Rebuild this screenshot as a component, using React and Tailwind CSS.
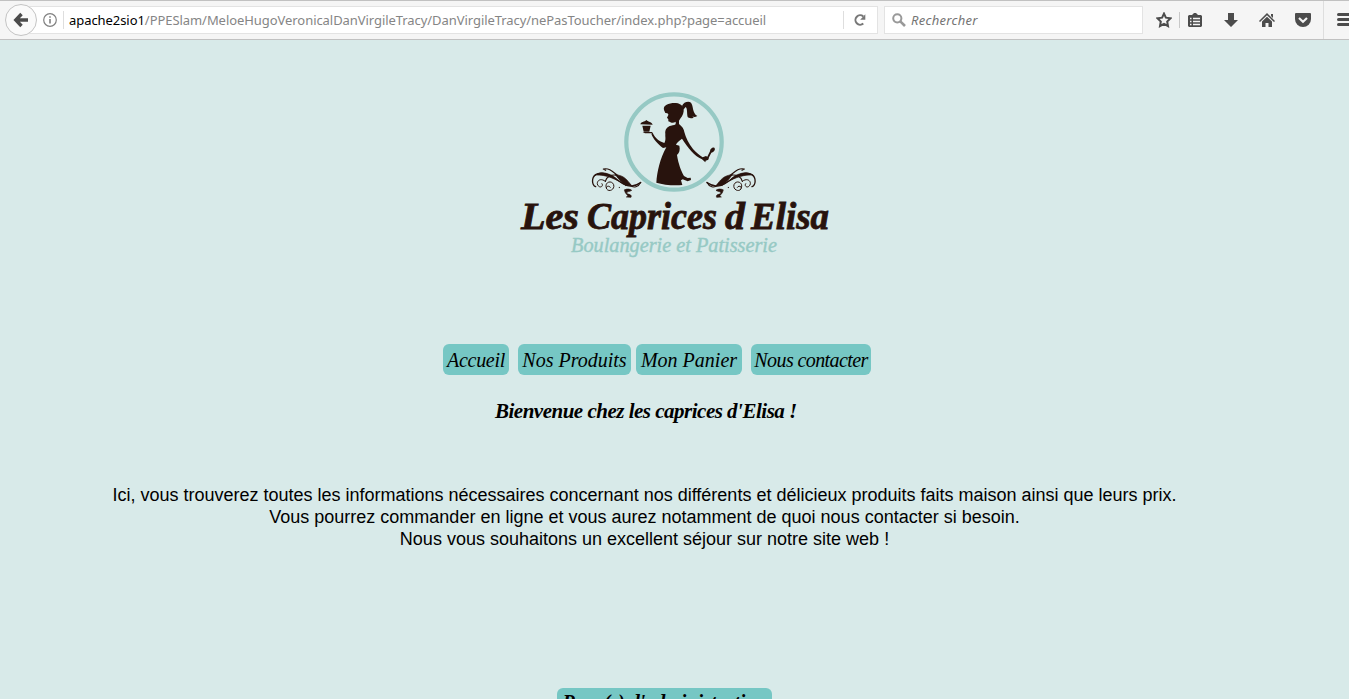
import React from "react";

const script = "font-['Brush_Script_MT','Liberation_Serif',serif] italic";

function Flourish() {
  return (
    <g fill="none" stroke="#28130d" strokeLinecap="round">
      <path d="M47 305C35 300 34 278 47 269C62 259 84 268 100 277C122 291 146 318 182 293" strokeWidth="4" />
      <path d="M46 270C62 257 90 265 107 279C121 293 137 304 155 302C142 286 133 271 106 269C114 278 117 286 129 293C107 286 84 268 46 270Z" fill="#28130d" strokeWidth="2" />
      <path d="M70 252C88 248 98 260 113 272M70 252L77 256M113 271C91 267 79 277 76 289M182 292C176 306 160 310 151 301" strokeWidth="3.5" />
      <path d="M76 289C60 276 48 290 53 300C60 312 72 303 66 296M79 309C72 291 95 284 101 299C105 314 87 322 80 312C76 304 88 300 91 307M118 307V308M137 302C137 294 146 291 151 299" strokeWidth="3" />
      <path d="M134 315C139 310 151 312 155 316C149 321 140 318 140 325C145 329 157 328 153 337L139 336C151 331 133 329 134 315Z" fill="#28130d" strokeWidth="2" />
    </g>
  );
}

function Logo() {
  return (
    <svg className="block h-[180px] w-[330px]" viewBox="510 85 330 180" role="img" aria-label="Les Caprices d'Elisa">
      <circle cx="674" cy="142" r="47.7" fill="none" stroke="#96c9c4" strokeWidth="4.2" />
      <g transform="translate(620 88) scale(.33333)" fill="#28130d">
        <path d="M186 54C190 43 205 38 213 44C221 54 216 74 232 84C225 88 220 87 217 84L221 89C212 92 206 90 203 87C200 75 203 63 197 57L190 65Z" />
        <path d="M132 66C128 50 149 44 168 45C184 47 193 56 191 70C190 82 182 90 177 98L177 108C185 114 192 122 193 132C197 148 207 168 219 183C228 193 240 202 248 208L258 204L266 209L265 215L257 218L256 223L246 214C222 203 205 180 186 152C178 158 170 164 168 170L178 173C181 185 178 195 171 201C175 228 184 250 192 264L203 270L212 269L213 276L203 280L188 274L183 277L187 291C160 294 130 290 109 284C111 253 120 211 139 178L129 180C113 168 99 152 94 137L98 134C104 149 118 160 133 165C139 154 135 147 136 138C134 124 142 115 153 113C160 111 167 111 167 108L167 101C161 106 152 105 150 101C144 102 145 98 145 94L141 89L145 81C146 77 141 74 136 75Z" />
        <path d="M260 210L270 190C270 183 277 177 283 179C288 184 281 193 274 194L264 214ZM61 109C63 101 73 102 79 96C86 102 95 102 98 110ZM67 113H92L88 131H71ZM68 132H97V136H75Z" />
      </g>
      <g transform="translate(580 85) scale(.33333)">
        <Flourish />
        <g transform="translate(563 0) scale(-1 1)"><Flourish /></g>
      </g>
      <g fontFamily="'Brush Script MT', 'Liberation Serif', serif" fontStyle="italic">
        <g fill="#28130d" stroke="#28130d" strokeWidth=".8" fontSize="38" fontWeight="700">
          <text x="521" y="229" textLength="58" lengthAdjust="spacingAndGlyphs">Les</text>
          <text x="587" y="229" textLength="130" lengthAdjust="spacingAndGlyphs">Caprices</text>
          <text x="725" y="229" textLength="20" lengthAdjust="spacingAndGlyphs">d</text>
          <text x="751" y="229" textLength="78" lengthAdjust="spacingAndGlyphs">Elisa</text>
        </g>
        <text x="571" y="252" fill="#96c9c4" stroke="#96c9c4" strokeWidth=".4" fontSize="21" textLength="206" lengthAdjust="spacingAndGlyphs">Boulangerie et Patisserie</text>
      </g>
    </svg>
  );
}

function BrowserBar() {
  return (
    <header className="flex h-10 w-full shrink-0 items-center overflow-hidden border-t border-b border-[#c1c1c1] bg-[#f5f5f5] font-['Noto_Sans',sans-serif] text-[13px]">
      <div className="z-10 ml-[5px] flex size-8 shrink-0 items-center justify-center rounded-full border border-[#c4c4c4] bg-[#fafafa]">
        <svg className="h-4 w-4" viewBox="0 0 16 16" fill="none" stroke="#4c4c4c" strokeWidth="3.4"><path d="M8.500 2L2.800 8L8.500 14M3 8H15" /></svg>
      </div>
      <div className="-ml-2 flex h-7 w-[849px] shrink-0 items-center border border-[#e3e3e3] bg-white pl-[13px]">
        <svg className="size-[14px] shrink-0" viewBox="0 0 14 14" fill="none" stroke="#808080"><circle cx="7" cy="7" r="6.300" strokeWidth="1.200" /><path d="M7 6V10.500M7 3.200V4.700" strokeWidth="1.600" /></svg>
        <span className="ml-[6px] h-[18px] w-px bg-[#dedede]" />
        <span className="ml-[5px] w-[774px] shrink-0 pt-px whitespace-nowrap tracking-[-0.06px] text-[#858585]"><span className="text-black">apache2sio1</span>/PPESlam/MeloeHugoVeronicalDanVirgileTracy/DanVirgileTracy/nePasToucher/index.php?page=accueil</span>
        <span className="h-[18px] w-px bg-[#dedede]" />
        <svg className="ml-[9px] size-[14px] shrink-0" viewBox="0 0 14 14" fill="none" stroke="#777" strokeWidth="2"><path d="M10.300 10.500A4.700 4.700 0 1 1 10.300 3.500" /><path d="M12.300 1.300V6.700H7.200Z" fill="#777" stroke="none" /></svg>
      </div>
      <div className="ml-[6px] flex h-7 w-[259px] shrink-0 items-center border border-[#e3e3e3] bg-white pl-[7px]">
        <svg className="size-[14px]" viewBox="0 0 14 14" fill="none" stroke="#999" strokeWidth="2"><circle cx="5.300" cy="5.300" r="4.100" /><path d="M8.300 8.300L13 13" strokeWidth="2.600" /></svg>
        <span className="ml-[5px] pt-px italic tracking-[0.3px] text-[#747474]">Rechercher</span>
      </div>
      <div className="ml-[13px] flex shrink-0 items-center text-[#4c4c4c]">
        <svg className="h-4 w-4" viewBox="0 0 16 16" fill="none" stroke="currentColor" strokeWidth="2"><path d="M8 1.600L9.900 5.700L14.500 6.300L11.200 9.500L12 14L8 11.800L4 14L4.800 9.500L1.500 6.300L6.100 5.700Z" /></svg>
        <span className="ml-[7px] h-4 w-px bg-[#c8c8c8]" />
        <svg className="ml-[8px] h-4 w-[14px]" viewBox="0 0 14 16"><path d="M1 3H4L6 1H8L10 3H13L14 4V14L13 15H1L0 14V4Z" fill="currentColor" /><path d="M2 6.500H3.500M5 6.500H12M2 9.500H3.500M5 9.500H12M2 12.500H3.500M5 12.500H12" stroke="#f5f5f5" strokeWidth="1.500" /></svg>
        <svg className="ml-[22px] h-4 w-[14px]" viewBox="0 0 14 16" fill="currentColor"><path d="M4 1H10V8H14L7 15L0 8H4Z" /></svg>
        <svg className="ml-[21px] h-4 w-4" viewBox="0 0 16 16" fill="currentColor"><path d="M8 1L16 9L15 10L8 3.300L1 10L0 9ZM12 2H14V6L12 4Z" /><path d="M3 9.500L8 4.800L13 9.500V15H9.500V11H6.500V15H3Z" /></svg>
        <svg className="ml-[20px] h-4 w-4" viewBox="0 0 16 16"><path d="M1 1H15Q16 1 16 2V7A8 8 0 0 1 0 7V2Q0 1 1 1Z" fill="currentColor" /><path d="M4 6L8 9.700L12 6" fill="none" stroke="#f5f5f5" strokeWidth="2.200" /></svg>
        <span className="ml-[12px] h-[38px] w-px bg-[#dedede]" />
        <svg className="ml-[13px] h-4 w-4" viewBox="0 0 16 16" stroke="currentColor" strokeWidth="3" strokeLinecap="round"><path d="M1.500 2.500H15M1.500 7.500H15M1.500 12.500H15" /></svg>
      </div>
    </header>
  );
}

function Button({ className, children }) {
  return <a className={`flex h-[31px] shrink-0 items-center justify-center whitespace-nowrap rounded-md bg-[#76c7c4] text-[20px] leading-none text-black ${script} ${className}`}>{children}</a>;
}

export default function App() {
  return (
    <div className="flex h-[699px] w-[1349px] flex-col overflow-hidden bg-[#d8eae9] text-black">
      <BrowserBar />
      <main className="flex shrink-0 flex-col">
        <div className="mt-[45px] ml-[510px]"><Logo /></div>
        <nav className="mt-[79px] ml-[443px] flex">
          <Button className="w-[66px] tracking-[-0.3px]">Accueil</Button>
          <Button className="ml-[9px] w-[113px]">Nos Produits</Button>
          <Button className="ml-[5px] w-[106px]">Mon Panier</Button>
          <Button className="ml-[9px] w-[120px] tracking-[-0.6px]">Nous contacter</Button>
        </nav>
        <h1 className={`mt-[22px] ml-[495px] h-7 whitespace-nowrap text-[21px] leading-7 font-bold tracking-[-0.5px] ${script}`}>Bienvenue chez les caprices d'Elisa !</h1>
        <p className="mt-[59px] w-[1289px] text-center font-['Liberation_Sans',sans-serif] text-[18px] leading-[22px]">
          Ici, vous trouverez toutes les informations nécessaires concernant nos différents et délicieux produits faits maison ainsi que leurs prix.<br />
          Vous pourrez commander en ligne et vous aurez notamment de quoi nous contacter si besoin.<br />
          Nous vous souhaitons un excellent séjour sur notre site web !
        </p>
        <div className="mt-[138px] ml-[557px] flex"><Button className="w-[215px] pb-1 font-bold">Page(s) d'administration</Button></div>
      </main>
    </div>
  );
}
